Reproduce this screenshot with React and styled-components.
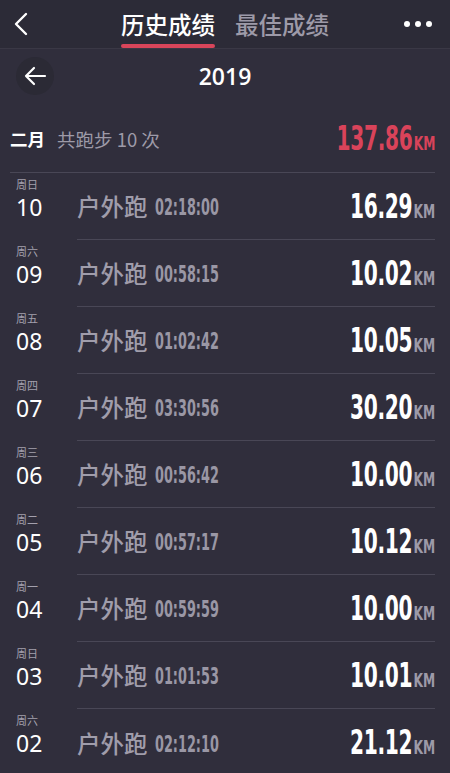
import React from "react";
import styled, { createGlobalStyle } from "styled-components";

const Global = createGlobalStyle`
  html, body { margin: 0; padding: 0; background: #302e3c; }
  body { font-family: "Noto Sans", "Noto Sans CJK SC", sans-serif; }
`;

const Page = styled.div`
  width: 450px;
  height: 773px;
  overflow: hidden;
  background: #302e3c;
  color: #fff;
`;

const TopBar = styled.div`
  height: 48px;
  display: flex;
  align-items: center;
  padding: 0 18px 0 14px;
  background: #2c2b37;
  border-bottom: 1px solid #3a3845;
`;

const IconBtn = styled.div`
  width: 30px;
  display: flex;
  align-items: center;
`;

const Tabs = styled.div`
  flex: 1;
  display: flex;
  justify-content: center;
  gap: 20px;
  padding-left: 4px;
`;

const Tab = styled.div`
  position: relative;
  font-family: "Noto Sans CJK SC", sans-serif;
  font-size: 23.5px;
  font-weight: 500;
  line-height: 48px;
  color: ${(p) => (p.active ? "#ffffff" : "#9d9aa8")};
  &::after {
    content: "";
    display: ${(p) => (p.active ? "block" : "none")};
    position: absolute;
    left: 0;
    right: 0;
    bottom: 0;
    height: 4px;
    border-radius: 2px;
    background: #d8455a;
  }
`;

const Dots = styled.div`
  width: 30px;
  display: flex;
  justify-content: flex-end;
  gap: 5px;
  span {
    width: 6px;
    height: 6px;
    border-radius: 50%;
    background: #fff;
  }
`;

const YearBar = styled.div`
  height: 54px;
  display: flex;
  align-items: center;
  padding: 0 16px;
`;

const Circle = styled.div`
  width: 38px;
  height: 38px;
  border-radius: 50%;
  background: #2b2a35;
  display: flex;
  align-items: center;
  justify-content: center;
`;

const Year = styled.div`
  flex: 1;
  text-align: center;
  font-size: 23px;
  font-weight: 600;
  padding-right: 38px;
  font-family: "Open Sans", sans-serif;
`;

const MonthRow = styled.div`
  box-sizing: border-box;
  display: flex;
  align-items: center;
  margin: 14px 15px 0 10px;
  height: 56px;
  padding-bottom: 12px;
  border-bottom: 1px solid #494756;
`;

const Month = styled.div`
  font-family: "Noto Sans CJK SC", sans-serif;
  font-size: 17.5px;
  font-weight: 700;
  margin-right: 12px;
`;

const MonthCount = styled.div`
  flex: 1;
  font-family: "Noto Sans CJK SC", sans-serif;
  font-size: 18.5px;
  color: #9d9aa8;
`;

const Dist = styled.div`
  font-family: "DejaVu Sans Condensed", "Liberation Sans Narrow", sans-serif;
  font-weight: 700;
  font-size: 33px;
  letter-spacing: -0.5px;
  color: ${(p) => (p.red ? "#d9435a" : "#ffffff")};
  display: inline-block;
  transform: scaleX(0.68);
  transform-origin: right center;
  small {
    font-size: 20px;
    font-weight: 700;
    letter-spacing: 0;
    margin-left: 2px;
    color: ${(p) => (p.red ? "#d9435a" : "#9d9aa8")};
  }
`;

const Row = styled.div`
  display: flex;
  align-items: center;
  height: 67px;
`;

const DateCol = styled.div`
  width: 61px;
  padding: 3px 0 0 16px;
  align-self: stretch;
  display: flex;
  flex-direction: column;
`;

const Week = styled.div`
  font-family: "Noto Sans CJK SC", sans-serif;
  font-size: 11px;
  line-height: 16px;
  color: #a3a0ad;
`;

const Day = styled.div`
  font-family: "Noto Sans", sans-serif;
  font-size: 23px;
  line-height: 31px;
  color: #fff;
`;

const Body = styled.div`
  flex: 1;
  align-self: stretch;
  display: flex;
  align-items: center;
  margin-right: 15px;
  border-bottom: ${(p) => (p.last ? "none" : "1px solid #494756")};
`;

const Kind = styled.div`
  font-family: "Noto Sans CJK SC", sans-serif;
  font-size: 23.5px;
  font-weight: 500;
  color: #a09dab;
  margin-right: 7px;
`;

const Time = styled.div`
  flex: 1;
  font-family: "DejaVu Sans Condensed", "Liberation Sans Narrow", sans-serif;
  font-size: 23px;
  font-weight: 700;
  color: #9a97a5;
  display: inline-block;
  transform: scaleX(0.62);
  transform-origin: left center;
  margin-top: 2px;
`;

const runs = [
  ["周日", "10", "02:18:00", "16.29"],
  ["周六", "09", "00:58:15", "10.02"],
  ["周五", "08", "01:02:42", "10.05"],
  ["周四", "07", "03:30:56", "30.20"],
  ["周三", "06", "00:56:42", "10.00"],
  ["周二", "05", "00:57:17", "10.12"],
  ["周一", "04", "00:59:59", "10.00"],
  ["周日", "03", "01:01:53", "10.01"],
  ["周六", "02", "02:12:10", "21.12"],
];

export default function App() {
  return (
    <Page>
      <Global />
      <TopBar>
        <IconBtn>
          <svg width="14" height="24" viewBox="0 0 14 24">
            <path d="M12 2 L2 12 L12 22" fill="none" stroke="#fff" strokeWidth="2.4" strokeLinecap="round" strokeLinejoin="round" />
          </svg>
        </IconBtn>
        <Tabs>
          <Tab active>历史成绩</Tab>
          <Tab>最佳成绩</Tab>
        </Tabs>
        <Dots>
          <span />
          <span />
          <span />
        </Dots>
      </TopBar>
      <YearBar>
        <Circle>
          <svg width="24" height="20" viewBox="0 0 24 20">
            <path d="M22 10 H3 M11 2 L3 10 L11 18" fill="none" stroke="#fff" strokeWidth="2.2" strokeLinecap="round" strokeLinejoin="round" />
          </svg>
        </Circle>
        <Year>2019</Year>
      </YearBar>
      <MonthRow>
        <Month>二月</Month>
        <MonthCount>共跑步 10 次</MonthCount>
        <Dist red>
          137.86<small>KM</small>
        </Dist>
      </MonthRow>
      {runs.map(([w, d, t, km], i) => (
        <Row key={d}>
          <DateCol>
            <Week>{w}</Week>
            <Day>{d}</Day>
          </DateCol>
          <Body last={i === runs.length - 1}>
            <Kind>户外跑</Kind>
            <Time>{t}</Time>
            <Dist>
              {km}
              <small>KM</small>
            </Dist>
          </Body>
        </Row>
      ))}
    </Page>
  );
}
